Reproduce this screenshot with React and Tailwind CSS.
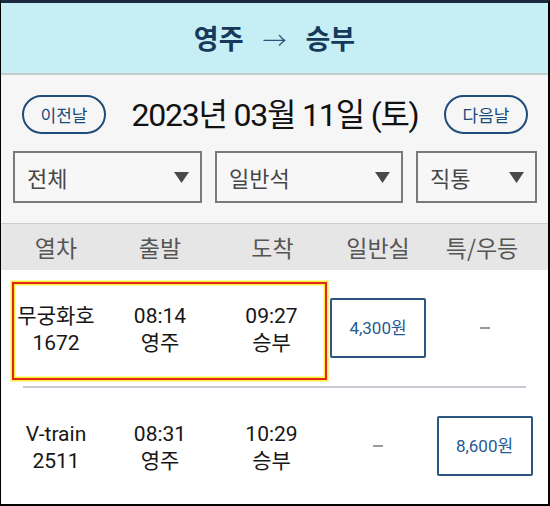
import React from "react";

const trains = [
  { name: "무궁화호", no: "1672", dep: "08:14", arr: "09:27", from: "영주", to: "승부", normal: "4,300원", special: null, selected: true },
  { name: "V-train", no: "2511", dep: "08:31", arr: "10:29", from: "영주", to: "승부", normal: null, special: "8,600원", selected: false },
];

const Caret = () => (
  <svg width="15" height="11" viewBox="0 0 15 11">
    <polygon points="0,0 15,0 7.5,11" fill="#4a4a4a" />
  </svg>
);

const Select = ({ label, width }) => (
  <div className={`flex h-[52px] items-center justify-between border-2 border-[#7a7a7a] bg-[#f7f7f7] pl-[12px] pr-[11px] ${width}`}>
    <span className="font-['Noto_Sans_CJK_KR',sans-serif] text-[22px] text-[#474747]">{label}</span>
    <Caret />
  </div>
);

const PriceBox = ({ price }) => (
  <div className="flex h-[60px] w-[96px] items-center justify-center rounded-[2px] border-2 border-[#2b5680] bg-white font-['Roboto','Noto_Sans_CJK_KR',sans-serif] text-[17px] text-[#1f5b94]">
    {price}
  </div>
);

const Dash = () => <div className="h-[2px] w-[10px] bg-[#9a9a9a]" />;

const App = () => {
  return (
    <div className="flex h-[506px] w-[550px] flex-col overflow-hidden border-b-2 border-l border-r-2 border-t-[3px] border-black border-t-[#1b2a3e] bg-white font-['Roboto','Noto_Sans_CJK_KR',sans-serif]">
      <div className="flex h-[72px] shrink-0 items-center justify-center gap-[19px] border-b-2 border-[#c3cdce] bg-[#c6eff5] pt-[1px] font-['Noto_Sans_CJK_KR',sans-serif] text-[27px] font-semibold text-[#16395b]">
        <span>영주</span>
        <span className="text-[24px] font-light text-[#2d5577]">→</span>
        <span>승부</span>
      </div>

      <div className="shrink-0 bg-[#f6f6f6] pb-[20px] pt-[20px]">
        <div className="flex h-[39px] items-center justify-between pl-[21px] pr-[20px]">
          <button className="flex h-[39px] w-[84px] items-center justify-center rounded-full border-2 border-[#1f4c78] font-['Noto_Sans_CJK_KR',sans-serif] text-[17px] text-[#1b4b7b]">
            이전날
          </button>
          <div className="text-[32px] leading-none tracking-[-1.2px] text-[#111111]">2023년 03월 11일 (토)</div>
          <button className="flex h-[39px] w-[84px] items-center justify-center rounded-full border-2 border-[#1f4c78] font-['Noto_Sans_CJK_KR',sans-serif] text-[17px] text-[#1b4b7b]">
            다음날
          </button>
        </div>
        <div className="mt-[17px] flex gap-[13px] pl-[12px]">
          <Select label="전체" width="w-[189px]" />
          <Select label="일반석" width="w-[188px]" />
          <Select label="직통" width="w-[121px]" />
        </div>
      </div>

      <div className="grid h-[47px] shrink-0 grid-cols-[110px_98px_121px_96px_1fr] items-center border-t border-[#cdcdcd] bg-[#e6e6e6] font-['Noto_Sans_CJK_KR',sans-serif] text-[23px] text-[#555555]">
        <div className="text-center">열차</div>
        <div className="text-center">출발</div>
        <div className="pl-[6px] text-center">도착</div>
        <div className="text-center">일반실</div>
        <div className="pr-[10px] text-center">특/우등</div>
      </div>

      {trains.map((t, i) => (
        <div key={t.no}>
          {i > 0 && <div className="mx-[22px] h-[2px] bg-[#c5cbd1]" />}
          <div className="relative grid h-[116px] grid-cols-[110px_98px_121px_96px_1fr] items-center text-[21px] leading-[27px] text-[#161616]">
            {t.selected && (
              <div className="absolute bottom-[6px] left-[11px] top-[12px] w-[315px] border-2 border-[#e3261b] shadow-[0_0_0_1.5px_#fbef3c,inset_0_0_0_1.5px_#fbef3c]" />
            )}
            <div className="flex flex-col items-center pt-[4px]">
              <span>{t.name}</span>
              <span>{t.no}</span>
            </div>
            <div className="flex flex-col items-center pt-[4px]">
              <span>{t.dep}</span>
              <span>{t.from}</span>
            </div>
            <div className="flex flex-col items-center pl-[4px] pt-[4px]">
              <span>{t.arr}</span>
              <span>{t.to}</span>
            </div>
            <div className="flex justify-center">
              {t.normal ? <PriceBox price={t.normal} /> : <Dash />}
            </div>
            <div className="flex justify-center pr-[5px]">
              {t.special ? <PriceBox price={t.special} /> : <Dash />}
            </div>
          </div>
        </div>
      ))}
    </div>
  );
};

export default App;
